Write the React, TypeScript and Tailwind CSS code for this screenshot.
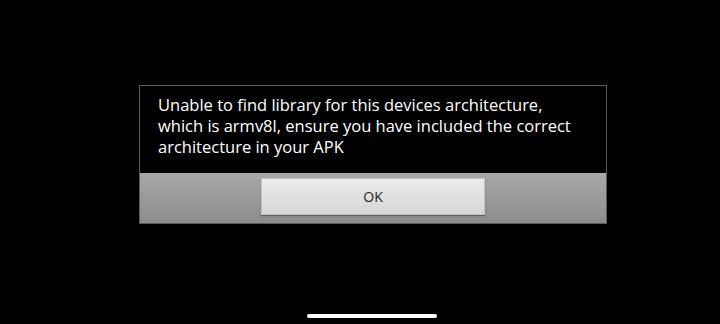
export default function App() {
  return (
    <div className="w-[720px] h-[324px] bg-black flex flex-col overflow-hidden">
      <div className="ml-[139px] mt-[85px] w-[468px] h-[139px] border border-[#5a5a5a] flex flex-col">
        <div className="h-[87px] bg-black pl-[18px] pr-3 pt-[8px]">
          <p
            className="text-white text-[16.5px] leading-[21px]"
            style={{ fontFamily: '"Open Sans", "Liberation Sans", sans-serif' }}
          >
            Unable to find library for this devices architecture,
            <br />
            which is armv8l, ensure you have included the correct
            <br />
            architecture in your APK
          </p>
        </div>
        <div className="flex-1 bg-gradient-to-b from-[#a8a8a8] to-[#8c8c8c] flex justify-center pt-[5px]">
          <button
            className="w-[224px] h-[37px] bg-gradient-to-b from-[#ececec] to-[#d6d6d6] border border-[#c4c4c4] shadow-[0_1px_1px_rgba(0,0,0,0.35)] text-[#222] text-[14px]"
            style={{ fontFamily: '"Open Sans", "Liberation Sans", sans-serif' }}
          >
            OK
          </button>
        </div>
      </div>
      <div className="mt-auto mb-[6px] ml-[307px] w-[130px] h-[4px] rounded-full bg-white" />
    </div>
  );
}
